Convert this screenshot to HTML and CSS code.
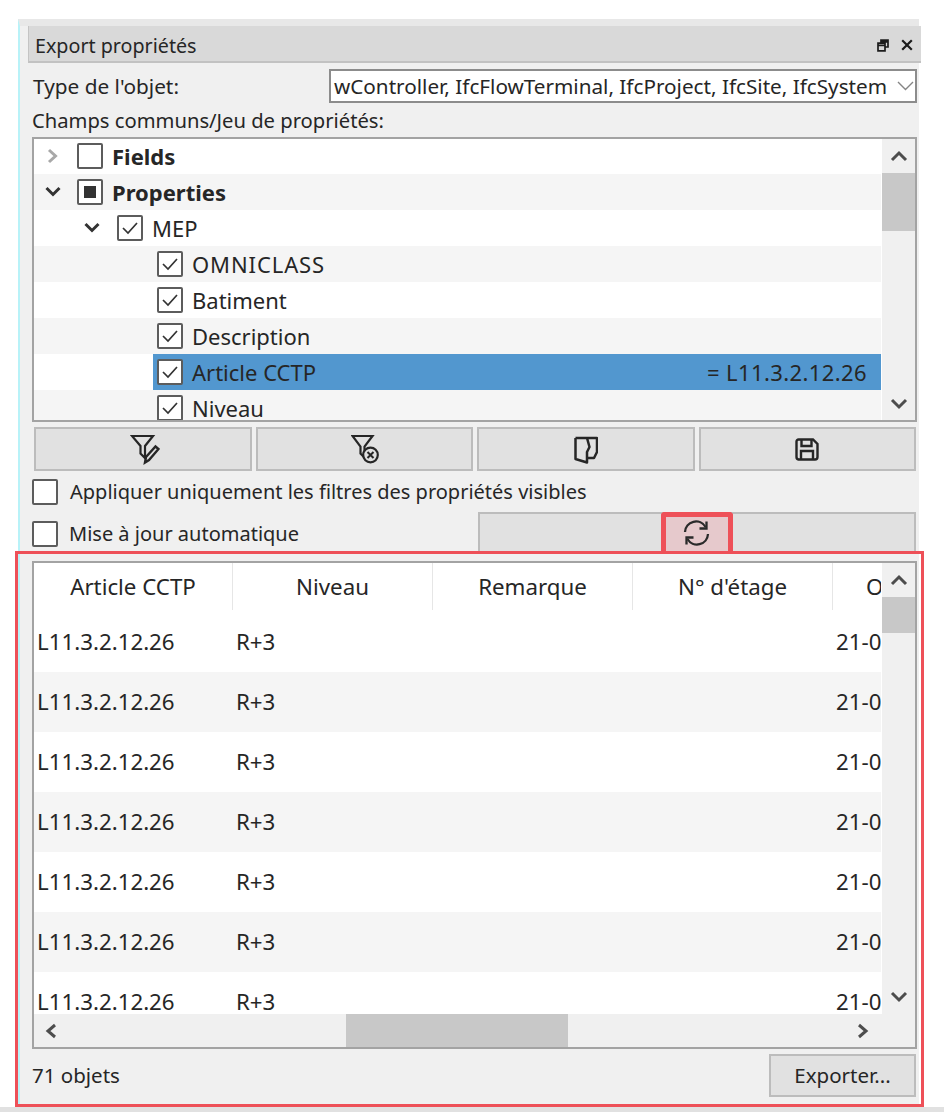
FILE: index.html
```html
<!DOCTYPE html>
<html lang="fr">
<head>
<meta charset="utf-8">
<title>Export propriétés</title>
<link rel="stylesheet" href="styles.css">
</head>
<body>
<main class="panel">
  <header class="titlebar">
    <span class="title">Export propriétés</span>
    <svg class="t-icon" width="12" height="13" viewBox="0 0 12 13"><path d="M4 4V1.2h7V8H8.2M1 4.2h7v7.6H1zM1 6.4h7M4 2.8h7" fill="none" stroke="#1c1c1c" stroke-width="1.7"/></svg>
    <svg class="t-icon close" width="12" height="12" viewBox="0 0 12 12"><path d="M1.2 1.2l9.6 9.6M10.8 1.2l-9.6 9.6" fill="none" stroke="#1c1c1c" stroke-width="2.2"/></svg>
  </header>

  <div class="type-row">
    <label class="type-label">Type de l'objet:</label>
    <div class="combo">
      <span class="combo-text">wController, IfcFlowTerminal, IfcProject, IfcSite, IfcSystem</span>
      <svg width="17" height="10" viewBox="0 0 17 10"><path d="M1 1l7.5 7.5L16 1" fill="none" stroke="#858585" stroke-width="1.4"/></svg>
    </div>
  </div>
  <div class="fields-label">Champs communs/Jeu de propriétés:</div>

  <section class="tree">
    <div class="tree-main">
      <div class="row lvl0">
        <svg class="chev" width="12" height="16" viewBox="0 0 12 16"><path d="M2 2l6.5 6L2 14" fill="none" stroke="#a8a8a8" stroke-width="3"/></svg>
        <span class="box"></span><strong class="name">Fields</strong>
      </div>
      <div class="row lvl0 alt">
        <svg class="chev down" width="16" height="12" viewBox="0 0 16 12"><path d="M1.5 2L8 8.500 14.500 2" fill="none" stroke="#333" stroke-width="3"/></svg>
        <span class="box"><span class="partial"></span></span><strong class="name">Properties</strong>
      </div>
      <div class="row lvl1">
        <svg class="chev" width="16" height="12" viewBox="0 0 16 12"><path d="M1.5 2L8 8.500 14.500 2" fill="none" stroke="#333" stroke-width="3"/></svg>
        <span class="box"><svg width="20" height="16" viewBox="0 0 20 16"><path d="M3 8l5 5L17 3" fill="none" stroke="#333" stroke-width="1.700"/></svg></span><span class="name">MEP</span>
      </div>
      <div class="row lvl2 alt"><div class="leaf"><span class="box"><svg width="20" height="16" viewBox="0 0 20 16"><path d="M3 8l5 5L17 3" fill="none" stroke="#333" stroke-width="1.700"/></svg></span><span class="name wide">OMNICLASS</span></div></div>
      <div class="row lvl2"><div class="leaf"><span class="box"><svg width="20" height="16" viewBox="0 0 20 16"><path d="M3 8l5 5L17 3" fill="none" stroke="#333" stroke-width="1.700"/></svg></span><span class="name">Batiment</span></div></div>
      <div class="row lvl2 alt"><div class="leaf"><span class="box"><svg width="20" height="16" viewBox="0 0 20 16"><path d="M3 8l5 5L17 3" fill="none" stroke="#333" stroke-width="1.700"/></svg></span><span class="name">Description</span></div></div>
      <div class="row lvl2"><div class="leaf selected"><span class="box"><svg width="20" height="16" viewBox="0 0 20 16"><path d="M3 8l5 5L17 3" fill="none" stroke="#333" stroke-width="1.700"/></svg></span><span class="name">Article CCTP</span><span class="value">= L11.3.2.12.26</span></div></div>
      <div class="row lvl2 alt"><div class="leaf"><span class="box"><svg width="20" height="16" viewBox="0 0 20 16"><path d="M3 8l5 5L17 3" fill="none" stroke="#333" stroke-width="1.700"/></svg></span><span class="name">Niveau</span></div></div>
    </div>
    <div class="vscroll">
      <div class="arrow"><svg width="18" height="12" viewBox="0 0 18 12"><path d="M2 10l7-7 7 7" fill="none" stroke="#4d4d4d" stroke-width="3"/></svg></div>
      <div class="thumb thumb-tree"></div>
      <div class="spacer"></div>
      <div class="arrow arrow-low"><svg width="18" height="12" viewBox="0 0 18 12"><path d="M2 2l7 7 7-7" fill="none" stroke="#4d4d4d" stroke-width="3"/></svg></div>
    </div>
  </section>

  <div class="tools">
    <button class="tool">
      <svg class="nudge" width="30" height="31" viewBox="0 0 30 31"><g fill="none" stroke="#262626"><path d="M2 2h21l-8 10v12l-4.500-4.500V12z" stroke-width="2.200"/><path d="M15 28.500l1-5.500 9.500-10.500 3 2.500-9.500 11z" stroke-width="2.400"/></g></svg>
    </button>
    <button class="tool">
      <svg class="nudge" width="30" height="31" viewBox="0 0 30 31"><g fill="none" stroke="#262626"><path d="M1.500 2h20l-8 10.500v11l-4-4V12.500z" stroke-width="2.200"/><circle cx="19.500" cy="21" r="7.300" fill="#e1e1e1" stroke-width="2.200"/><path d="M16.500 18l6 6M22.500 18l-6 6" stroke-width="2"/></g></svg>
    </button>
    <button class="tool">
      <svg width="24" height="29" viewBox="0 0 24 29"><path d="M1.500 3H23V17L20 23H13M13 3L15.500 12 13 17V27.500L1.500 24V3" fill="none" stroke="#262626" stroke-width="2.500" stroke-linejoin="round"/></svg>
    </button>
    <button class="tool">
      <svg width="24" height="23" viewBox="0 0 24 23"><g fill="none" stroke="#262626" stroke-width="2.400"><path d="M3.500 1.500H18l4.500 4.500v13a2.500 2.500 0 0 1-2.500 2.500H3.500A2.500 2.500 0 0 1 1.500 19V3.500a2 2 0 0 1 2-2z"/><path d="M6.500 2v6h10V2M6 21v-8h12v8"/></g></svg>
    </button>
  </div>

  <div class="opt-row"><span class="box"></span><span class="opt-text">Appliquer uniquement les filtres des propriétés visibles</span></div>

  <div class="auto-row">
    <div class="auto-left"><span class="box"></span><span class="auto-text">Mise à jour automatique</span></div>
    <button class="refresh">
      <span class="refresh-mark">
        <svg width="27" height="26" viewBox="0 0 27 26"><g fill="none" stroke="#2a2a2a" stroke-width="2.300"><path d="M2 12A11 11 0 0 1 22.500 7M25 14A11 11 0 0 1 4.500 19"/><path d="M23.500 1.500V8.500H16.500M3.500 24.500V17.500H10.500"/></g></svg>
      </span>
    </button>
  </div>

  <section class="results">
    <div class="table">
      <div class="table-main">
        <div class="cols head">
          <div class="th">Article CCTP</div><div class="th">Niveau</div><div class="th">Remarque</div><div class="th">N° d'étage</div><div class="th th-last">OMNICLASS</div>
        </div>
        <div class="cols tr"><span class="td">L11.3.2.12.26</span><span class="td">R+3</span><span class="td"></span><span class="td"></span><span class="td">21-0</span></div>
        <div class="cols tr alt"><span class="td">L11.3.2.12.26</span><span class="td">R+3</span><span class="td"></span><span class="td"></span><span class="td">21-0</span></div>
        <div class="cols tr"><span class="td">L11.3.2.12.26</span><span class="td">R+3</span><span class="td"></span><span class="td"></span><span class="td">21-0</span></div>
        <div class="cols tr alt"><span class="td">L11.3.2.12.26</span><span class="td">R+3</span><span class="td"></span><span class="td"></span><span class="td">21-0</span></div>
        <div class="cols tr"><span class="td">L11.3.2.12.26</span><span class="td">R+3</span><span class="td"></span><span class="td"></span><span class="td">21-0</span></div>
        <div class="cols tr alt"><span class="td">L11.3.2.12.26</span><span class="td">R+3</span><span class="td"></span><span class="td"></span><span class="td">21-0</span></div>
        <div class="cols tr"><span class="td">L11.3.2.12.26</span><span class="td">R+3</span><span class="td"></span><span class="td"></span><span class="td">21-0</span></div>
      </div>
      <div class="vscroll">
        <div class="arrow"><svg width="18" height="12" viewBox="0 0 18 12"><path d="M2 10l7-7 7 7" fill="none" stroke="#4d4d4d" stroke-width="3"/></svg></div>
        <div class="thumb thumb-table"></div>
        <div class="spacer"></div>
        <div class="arrow"><svg width="18" height="12" viewBox="0 0 18 12"><path d="M2 2l7 7 7-7" fill="none" stroke="#4d4d4d" stroke-width="3"/></svg></div>
      </div>
      <div class="hscroll">
        <svg class="h-left" width="12" height="16" viewBox="0 0 12 16"><path d="M10 2L3 8l7 6" fill="none" stroke="#4d4d4d" stroke-width="3"/></svg>
        <div class="thumb-h"></div>
        <svg class="h-right" width="12" height="16" viewBox="0 0 12 16"><path d="M2 2l7 6-7 6" fill="none" stroke="#4d4d4d" stroke-width="3"/></svg>
      </div>
    </div>
    <footer class="foot">
      <span class="count">71 objets</span>
      <button class="export">Exporter...</button>
    </footer>
  </section>
</main>
<div class="strip"></div>
</body>
</html>
```
FILE: styles.css
```css
* { box-sizing: border-box; }
html, body { margin: 0; height: 1112px; overflow: hidden; background: #fff; }
body {
  font-family: "Noto Sans", "Open Sans", "Liberation Sans", sans-serif;
  font-size: 20px;
  color: #262626;
  padding-top: 19px;
  display: flex;
  flex-direction: column;
}
button { font: inherit; color: inherit; padding: 0; }

.panel {
  width: 901px;
  height: 1088px;
  margin-left: 18px;
  padding: 0 2px 0 12px;
  background: #f0f0f0;
  border-left: 2px solid #b8f2f8;
  border-top: 7px solid #e8e8e8;
  display: flex;
  flex-direction: column;
}
.strip { height: 5px; background: #e1e1e1; flex: none; }

.titlebar {
  height: 37px;
  margin: 0 -4px 0 -4px;
  padding: 3px 8px 0 6px;
  background: #d9d9d9;
  border-left: 1px solid #c4c4c4;
  border-bottom: 2px solid #c2c2c2;
  display: flex;
  align-items: center;
  flex: none;
}
.title { flex: 1; font-size: 19.7px; }
.t-icon { flex: none; }
.close { margin-left: 12px; }

.type-row { margin-top: 6px; height: 34px; display: flex; align-items: center; flex: none; }
.type-label { width: 297px; padding-left: 1px; font-size: 20.800px; }
.combo {
  flex: 1;
  height: 34px;
  border: 2px solid #8c8c8c;
  background: #fff;
  padding: 0 1px 0 3px;
  display: flex;
  align-items: center;
  justify-content: space-between;
  white-space: nowrap;
  font-size: 20.700px;
}
.fields-label { height: 34px; line-height: 34px; flex: none; font-size: 20.200px; }

.tree {
  height: 285px;
  flex: none;
  border: 2px solid #a3a3a3;
  background: #fff;
  display: grid;
  grid-template-columns: 1fr 33px;
  overflow: hidden;
}
.tree-main { margin-top: -1px; margin-right: 1px; overflow: hidden; min-width: 0; }
.row { height: 36px; display: flex; align-items: center; font-size: 22px; }
.alt { background: #f5f5f5; }
.chev { flex: none; }
.lvl0 { padding-left: 13px; }
.lvl0 .chev { margin-right: 18px; }
.lvl0 .down { margin-left: -2px; margin-right: 16px; }
.lvl1 { padding-left: 50px; }
.lvl1 .chev { margin-right: 17px; }
.lvl2 { padding-left: 119px; }
.leaf { flex: 1; height: 36px; padding: 0 14px 0 4px; display: flex; align-items: center; }
.selected { background: #5297cf; }
.box {
  flex: none;
  width: 26px;
  height: 26px;
  border: 2px solid #5c5c5c;
  border-radius: 2px;
  background: #fff;
  display: flex;
  align-items: center;
  justify-content: center;
}
.partial { width: 12px; height: 12px; background: #333; }
.name { margin-left: 9px; white-space: nowrap; }
.wide { letter-spacing: 0.9px; }
.value { margin-left: auto; white-space: nowrap; letter-spacing: 0.4px; }

.vscroll { background: #f0f0f0; display: flex; flex-direction: column; }
.arrow { height: 34px; flex: none; display: flex; align-items: center; justify-content: center; }
.arrow-low { height: 32px; }
.thumb { background: #c8c8c8; flex: none; }
.thumb-tree { height: 58px; }
.thumb-table { height: 36px; }
.spacer { flex: 1; }

.tools {
  margin: 5px 1px 0 2px;
  display: grid;
  grid-template-columns: repeat(4, 1fr);
  gap: 4px;
  flex: none;
}
.tool {
  height: 44px;
  background: #e1e1e1;
  border: 2px solid #bcbcbc;
  display: flex;
  align-items: center;
  justify-content: center;
}
.nudge { margin-left: 4px; }

.opt-row { height: 41px; display: flex; align-items: center; flex: none; }
.opt-text { margin-left: 12px; }
.auto-row { height: 39px; display: flex; align-items: flex-start; flex: none; }
.auto-left { width: 446px; padding-top: 8px; display: flex; align-items: center; }
.auto-text { margin-left: 11px; }
.refresh {
  flex: 1;
  height: 41px;
  background: #e1e1e1;
  border: 2px solid #bcbcbc;
  display: flex;
  justify-content: center;
  margin-right: 1px;
  position: relative;
}
.refresh-mark {
  position: absolute;
  left: 181px;
  top: -2px;
  width: 72px;
  height: 39px;
  background: #e6c9cc;
  border: 5px solid #ee5058;
  border-bottom: 0;
  border-radius: 4px 4px 0 0;
  display: flex;
  justify-content: center;
  padding: 3px 2px 0 0;
}

.results {
  position: relative;
  margin: 0 -7px 0 -17px;
  padding: 7px 4px 0 14px;
  flex: 1;
  border: 3px solid #ee5058;
  display: flex;
  flex-direction: column;
}
.table {
  height: 488px;
  flex: none;
  border: 2px solid #a3a3a3;
  background: #fff;
  display: grid;
  grid-template-columns: 1fr 33px;
  grid-template-rows: 451px 33px;
  overflow: hidden;
}
.table-main { overflow: hidden; min-width: 0; margin-right: 1px; font-size: 22.300px; }
.cols { display: grid; grid-template-columns: 199px repeat(4, 200px); }
.head { height: 49px; background: #fff; }
.th {
  height: 47px;
  line-height: 47px;
  text-align: center;
  border-right: 1px solid #e6e6e6;
  white-space: nowrap;
}
.th-last { padding-left: 33px; border-right: 0; text-align: left; }
.tr { height: 60px; align-items: center; padding-bottom: 1px; }
.td { padding-left: 3px; white-space: nowrap; }
.hscroll {
  grid-column: 1 / 3;
  background: #f0f0f0;
  display: flex;
  align-items: center;
}
.h-left { margin-left: 11px; flex: none; }
.thumb-h { width: 222px; height: 33px; background: #c8c8c8; margin-left: 289px; flex: none; }
.h-right { margin-left: 289px; flex: none; }

.foot {
  flex: 1;
  display: flex;
  align-items: center;
  justify-content: space-between;
  padding: 0 1px 3px 0;
  font-size: 20.500px;
}
.export {
  width: 147px;
  height: 43px;
  background: #e1e1e1;
  border: 2px solid #bcbcbc;
}
```
